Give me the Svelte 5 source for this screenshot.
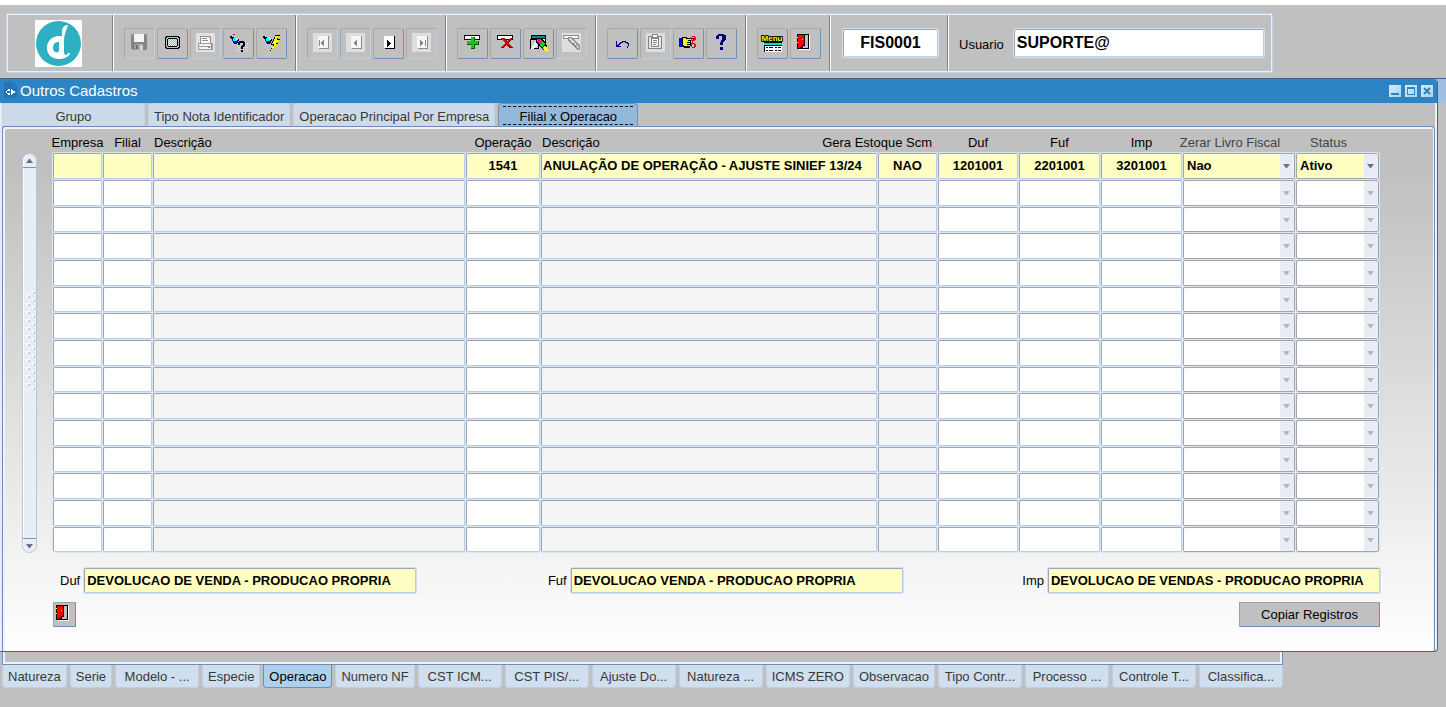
<script>
  const toolbarGroups = [
    [
      { icon: 'save', label: 'Salvar', off: true },
      { icon: 'screen', label: 'Tela' },
      { icon: 'print', label: 'Imprimir', off: true },
      { icon: 'enterQuery', label: 'Entrar consulta' },
      { icon: 'runQuery', label: 'Executar consulta' }
    ],
    [
      { icon: 'first', label: 'Primeiro', off: true },
      { icon: 'previous', label: 'Anterior', off: true },
      { icon: 'next', label: 'Proximo' },
      { icon: 'last', label: 'Ultimo', off: true }
    ],
    [
      { icon: 'insert', label: 'Inserir registro' },
      { icon: 'remove', label: 'Remover registro' },
      { icon: 'clear', label: 'Limpar tela' },
      { icon: 'edit', label: 'Editar', off: true }
    ],
    [
      { icon: 'undo', label: 'Desfazer' },
      { icon: 'paste', label: 'Colar', off: true },
      { icon: 'hand', label: 'Lista de valores' },
      { icon: 'help', label: 'Ajuda' }
    ],
    [
      { icon: 'menu', label: 'Menu' },
      { icon: 'door', label: 'Sair' }
    ]
  ];

  const topTabs = ['Grupo', 'Tipo Nota Identificador', 'Operacao Principal Por Empresa', 'Filial x Operacao'];
  const activeTop = 'Filial x Operacao';

  const bottomTabs = [
    'Natureza', 'Serie', 'Modelo - ...', 'Especie', 'Operacao', 'Numero NF', 'CST ICM...', 'CST PIS/...',
    'Ajuste Do...', 'Natureza ...', 'ICMS ZERO', 'Observacao', 'Tipo Contr...', 'Processo ...',
    'Controle T...', 'Classifica...'
  ];
  const activeBottom = 'Operacao';

  const columns = [
    { key: 'empresa', title: 'Empresa', kind: 'code' },
    { key: 'filial', title: 'Filial', kind: 'code' },
    { key: 'filialDesc', title: 'Descrição', kind: 'text', locked: true },
    { key: 'operacao', title: 'Operação', kind: 'code' },
    { key: 'operacaoDesc', title: 'Descrição', kind: 'text', locked: true },
    { key: 'scm', title: 'Gera Estoque Scm', kind: 'code', locked: true, wide: true },
    { key: 'duf', title: 'Duf', kind: 'code' },
    { key: 'fuf', title: 'Fuf', kind: 'code' },
    { key: 'imp', title: 'Imp', kind: 'code' },
    { key: 'zerar', title: 'Zerar Livro Fiscal', kind: 'choice', options: ['Nao', 'Sim'] },
    { key: 'status', title: 'Status', kind: 'choice', options: ['Ativo', 'Inativo'] }
  ];

  const first = {
    operacao: '1541',
    operacaoDesc: 'ANULAÇÃO DE OPERAÇÃO - AJUSTE SINIEF 13/24',
    scm: 'NAO',
    duf: '1201001',
    fuf: '2201001',
    imp: '3201001',
    zerar: 'Nao',
    status: 'Ativo'
  };
  const rows = [first, ...Array.from({ length: 14 }, () => ({}))];

  const details = [
    { id: 'duf', label: 'Duf', value: 'DEVOLUCAO DE VENDA - PRODUCAO PROPRIA' },
    { id: 'fuf', label: 'Fuf', value: 'DEVOLUCAO VENDA - PRODUCAO PROPRIA' },
    { id: 'imp', label: 'Imp', value: 'DEVOLUCAO DE VENDAS - PRODUCAO PROPRIA' }
  ];

  const grip = Array.from({ length: 25 }, (_, i) => ({ x: i % 2 ? 3 : 8, y: i * 4 }));
</script>

{#snippet torch()}
  <path d="M2 3h2v1h2v1h3v1h2v2h-1v2H9v1H6v-1H5V8H4V6H3V5H2z" fill="#000" />
  <path d="M5 5h3v1h2v1H9v1H7v1H5V8H4V6h1z" fill="#0ff" />
  <path d="M4 6h1v2h2v1h2v1H6V9H5V8H4z" fill="#00f" />
  <path d="M8 5h1v1h1v1H8z" fill="#fff" />
{/snippet}

{#snippet doorShape()}
  <path d="M2 1h12v15H2z" fill="#000" />
  <path d="M14 2h1v15H4v-1h10z" fill="#fff" />
  <path d="M10 2h3v13H8v-2h2z" fill="#c0c0c0" />
  <path d="M3 2h6v10H7v2H5v1H3z" fill="#f00" />
  <path d="M7 6h1v1H7zM2 4h1v1H2zM2 9h1v1H2z" fill="#ff0" />
{/snippet}

{#snippet glyph(name)}
  <svg class="glyph" viewBox="0 0 21 21" shape-rendering="crispEdges" aria-hidden="true">
    {#if name === 'save'}
      <path d="M2 1h16v16H4v-1H2z" fill="#858585" />
      <path d="M5 1h10v8H5z" fill="#f4f4f4" />
      <path d="M3 2h1v1H3zM16 2h1v1h-1z" fill="#c0c0c0" />
      <path d="M6 11h8v6H6z" fill="#a9a9a9" />
      <path d="M7 12h2v4H7z" fill="#707070" />
      <path d="M11 12h3v5h-3z" fill="#d2d2d2" />
    {:else if name === 'screen'}
      <path d="M4 3h13v1h1v11h-1v1H4v-1H3V4h1z" fill="#000" />
      <path d="M4 5h1V4h11v1h1v9h-1v1H5v-1H4z" fill="#c0c0c0" />
      <path d="M6 5h9v1h1v7h-1v1H6v-1H5V6h1z" fill="#000" />
      <path d="M6 6h9v7H6z" fill="#e8ffff" />
      <path d="M6 6.5h9M6 8.5h9M6 10.5h9M6 12.5h9" stroke="#30dcdc" stroke-dasharray="1 1" />
      <path d="M7 7.5h8M7 9.5h8M7 11.5h8" stroke="#30dcdc" stroke-dasharray="1 1" />
    {:else if name === 'print'}
      <path d="M1 0h19v19H1z" fill="#e2e2e2" />
      <path d="M5 3h9l2 2v6H5z" fill="#8c8c8c" />
      <path d="M6 4h8v1h1v5H6z" fill="#fff" />
      <path d="M7 5.5h5M7 7.5h6" stroke="#8c8c8c" />
      <path d="M3 10h15v7H3z" fill="#9a9a9a" />
      <path d="M4 11h12v2H4zM4 14h12v2H4z" fill="#f4f4f4" />
      <path d="M13 14h2v1h-2z" fill="#8c8c8c" />
    {:else if name === 'enterQuery'}
      {@render torch()}
      <path d="M5 1h2v1H5z" fill="#f00" />
      <path d="M9 10.5h11M9 12.5h11M9 14.5h11M9 16.5h11M9 18.5h11" stroke="#ff0" stroke-dasharray="1 1" />
      <path d="M11 8h5v1h1v4h-1v1h-1v2h-2v-3h1v-1h1v-2h-3v2h-2V9h1zM13 17h2v2h-2z" fill="#000" />
    {:else if name === 'runQuery'}
      {@render torch()}
      <path d="M14 2h5v1h-1v1h-1v2h2v1h-1v1h-1v1h-1v1h1v1h-1v1h-1v1h-1v1h-1v1h-1v1h-1v1h-1v1h-1v1H9v-2h1v-2h1v-1h1v-2h-2v-2h1V8h1V6h1V4h1z" fill="#000" />
      <path d="M14 3h4v1h-1v1h-1v2h2v1h-1v1h-1v1h-1v1h1v1h-1v1h-1v1h-1v1h-1v1h-1v1h-1v-1h1v-2h1v-1h1v-2h-2v-1h1V8h1V6h1z" fill="#ff0" />
    {:else if name === 'first' || name === 'previous' || name === 'last'}
      <path d="M1 0h19v19H1z" fill="#dedede" />
      <path d="M6 3h11v13H7v-1H6z" fill="#8c8c8c" />
      <path d="M6 3h10v12H6z" fill="#f6f6f6" />
      {#if name === 'first'}
        <path d="M7 7h1v6H7zM12 7v6h-1v-1h-1v-1H9V9h1V8h1V7z" fill="#858585" />
      {:else if name === 'previous'}
        <path d="M12 7v6h-1v-1h-1v-1H9V9h1V8h1V7z" fill="#858585" />
      {:else}
        <path d="M14 7h1v6h-1zM9 7v6h1v-1h1v-1h1V9h-1V8h-1V7z" fill="#858585" />
      {/if}
    {:else if name === 'next'}
      <path d="M6 3h11v13H7v-1H6z" fill="#000" />
      <path d="M6 3h10v12H6z" fill="#fff" />
      <path d="M9 7h1v1h1v1h1v1h1v1h-1v1h-1v1h-1v1H9z" fill="#000" />
    {:else if name === 'insert' || name === 'remove'}
      <path d="M2 2h16v5H2z" fill="#000" />
      <path d="M3 3h14v3H3z" fill="#fff" />
      {#if name === 'insert'}
        <path d="M9 4h4v4h4v4h-4v4H9v-4H5V8h4z" fill="#005a00" />
        <path d="M9 4h3v4h4v3h-4v4H9v-4H5V8h4z" fill="#10c818" />
      {:else}
        <path d="M6 5h3l3 3 3-3h3l-4 5 4 5h-4l-3-3-2 3H6l4-5z" fill="#7c0000" />
        <path d="M6 5h2l4 4 3-4h2l-4 5 4 4h-3l-3-3-3 3H6l4-4z" fill="#d00808" />
      {/if}
    {:else if name === 'clear'}
      <path d="M3 2h15v9H3z" fill="#000" />
      <path d="M4 3h13v2H4z" fill="#008c8c" />
      <path d="M4 6h13v4H4z" fill="#fff" />
      <path d="M2 6h9v10H2z" fill="#000" />
      <path d="M3 7h7v8H3z" fill="#c8c8c8" />
      <path d="M3 16l4-7 3-2v4l-4 5z" fill="#fff" />
      <path d="M8 5h5l5 5 1 4 1 4-4-1-3-2-5-6z" fill="#000" />
      <path d="M9 6h3l3 3-3 3-3-4z" fill="#ff1493" />
      <path d="M14 9h2l1 2-2 3h-2l-1-2z" fill="#00d820" />
      <path d="M16 13h2l2 4v2l-4-2-1-2z" fill="#ff0" />
    {:else if name === 'edit'}
      <path d="M1 0h19v19H1z" fill="#dedede" />
      <path d="M2 2h16v4H2z" fill="#8c8c8c" />
      <path d="M3 3h14v2H3z" fill="#f8f8f8" />
      <path d="M7 4h4l8 9v4h-3L7 8z" fill="#8c8c8c" />
      <path d="M8 5h2l8 9v2h-1L8 7z" fill="#c4c4c4" />
      <path d="M9 5l8 9" stroke="#f4f4f4" />
      <path d="M14 10l-3 2M16 12l-3 2" stroke="#858585" />
    {:else if name === 'undo'}
      <path d="M4 8h1v4h1v-1h1v-1h1V9h2V8h4v1h2v1h1v3h-1v2h-1v-2h1v-2h-1v-1h-2V9h-2v1H9v1H8v1H7v1h2v1H4z" fill="#000080" />
    {:else if name === 'paste'}
      <path d="M1 0h19v19H1z" fill="#dedede" />
      <path d="M3 3h4V1h6v2h4v13H3z" fill="#858585" />
      <path d="M4 4h12v11H4z" fill="#e8e8e8" />
      <path d="M6 4h8v10H6z" fill="#858585" />
      <path d="M8 2h4v2H8zM7 6h6v7H7z" fill="#fafafa" />
      <path d="M8 7.5h4M8 9.5h4M8 11.5h3" stroke="#858585" />
    {:else if name === 'hand'}
      <path d="M1 5h3v9H1z" fill="#0000e8" />
      <path d="M4 4h5v1h7v3h-3v2h1v3h-2v2H6v-1H4z" fill="#000" />
      <path d="M5 5h3v1h7v1h-5v1h2v1h-3v1h3v1H9v1h3v1H6v-1H5z" fill="#ffe818" />
      <path d="M5 7h1v1H5zM6 9h1v1H6zM5 11h1v1H5z" fill="#fff" />
      <path d="M14 3h3v1h1v3h-1v1h-2v2h2v1h1v3h-1v1h-3v-1h-1v-3h1V8h-1V4h1zM15 4h-1v3h2V4zM14 11v3h2v-3z" fill="#f00" fill-rule="evenodd" />
    {:else if name === 'help'}
      <path d="M7 1h6v1h2v5h-1v1h-1v1h-1v3H9V9h1V7h1V3H8v3H5V3h1V2h1zM9 14h3v3H9z" fill="#000080" />
    {:else if name === 'menu'}
      <text
        x="10" y="8" text-anchor="middle" font-family="Liberation Sans" font-size="8" font-weight="700"
        fill="#ff0" stroke="#000" stroke-width="2" stroke-linejoin="round" paint-order="stroke">Menu</text>
      <path d="M2 9h18v10H2z" fill="#000" />
      <path d="M2 10h18v2H2z" fill="#00e0e0" />
      <path d="M3 13h17v6H3z" fill="#fff" />
      <path d="M4 14.5h2M7 14.5h4M13 14.5h2M16 14.5h3M4 17.5h2M7 17.5h4M13 17.5h2M16 17.5h3" stroke="#000" />
    {:else if name === 'door'}
      {@render doorShape()}
    {/if}
  </svg>
{/snippet}

<header class="toolbar">
  <div class="group brand">
    <svg class="logo" viewBox="0 0 47 47" aria-hidden="true">
      <path d="M0 0h47v47H0z" fill="#fff" />
      <circle cx="23.500" cy="23.500" r="22.500" fill="#2eafc2" />
      <path d="M27 16C17 15 12 21 12 28c0 7 5 11 12 11 5 0 9-2 10-5-3 2-5 1-5-2V20c0-5 2-9 4-15-4 0-6 3-6 6v5zM24 22v9c-2 3-6 1-6-3s2-6 6-6z" fill="#fff" fill-rule="evenodd" />
      <path d="M27 37c4 0 7-2 7-4" fill="none" stroke="#fff" stroke-width="2" />
    </svg>
  </div>
  {#each toolbarGroups as group}
    <div class="group">
      {#each group as item}
        <button class="tool" class:off={item.off} disabled={item.off} aria-label={item.label}>
          {@render glyph(item.icon)}
        </button>
      {/each}
    </div>
  {/each}
  <div class="group program">
    <input class="big field code" aria-label="Programa" value="FIS0001" readonly />
  </div>
  <div class="group user">
    <label for="usuario">Usuario</label>
    <input id="usuario" class="big field" value="SUPORTE@" />
  </div>
</header>

<div class="workspace">
  <main class="window">
    <div class="titlebar">
      <svg class="page" viewBox="0 0 13 16" aria-hidden="true">
        <path d="M0 0h8v5h5v11H0z" fill="#2374b2" />
        <path d="M9 0l4 4H9z" fill="#2374b2" />
        <path d="M6 7H4v1H3v4h1v1h2v-2H5V9h1zM2 9h3v2H2zM7 7l5 3-5 3z" fill="#fff" shape-rendering="crispEdges" />
      </svg>
      <h1>Outros Cadastros</h1>
      <div class="controls">
        <button aria-label="Minimizar"><svg viewBox="0 0 12 12"><path d="M2 8h8v2H2z" fill="#2c84c4" /></svg></button>
        <button aria-label="Maximizar"><svg viewBox="0 0 12 12" shape-rendering="crispEdges"><path d="M2 2h8v8H2zM3 4v5h6V4z" fill="#2c84c4" fill-rule="evenodd" /></svg></button>
        <button aria-label="Fechar"><svg viewBox="0 0 12 12"><path d="M3 3l6 6M9 3l-6 6" stroke="#2c84c4" stroke-width="2" /></svg></button>
      </div>
    </div>

    <nav class="tabs top">
      {#each topTabs as tab}
        <button class="tab" class:active={tab === activeTop}><span>{tab}</span></button>
      {/each}
    </nav>

    <section class="panel">
      <div class="records">
        <div class="scrollbar">
          <button aria-label="Subir"><svg viewBox="0 0 7 4"><path d="M0 4h7L4 0H3z" fill="#6a7086" /></svg></button>
          <div class="track">
            <svg class="grip" viewBox="0 0 12 100" shape-rendering="crispEdges" aria-hidden="true">
              {#each grip as dot}
                <path d="M{dot.x} {dot.y}h3v1h-1v1h-1v1h-1z" fill="#fff" />
                <path d="M{dot.x + 2} {dot.y + 1}h1v1h-1v1h-1v-1h1z" fill="#8aa2c4" />
              {/each}
            </svg>
          </div>
          <button aria-label="Descer"><svg viewBox="0 0 7 4"><path d="M0 0h7L4 4H3z" fill="#6a7086" /></svg></button>
        </div>

        <table>
          <colgroup>
            {#each columns as column}<col class={column.key} />{/each}
          </colgroup>
          <thead>
            <tr>
              {#each columns as column}
                <th class={column.kind}><div class:wide={column.wide}>{column.title}</div></th>
              {/each}
            </tr>
          </thead>
          <tbody>
            {#each rows as row, index}
              <tr class:current={index === 0}>
                {#each columns as column}
                  <td class={column.kind} class:locked={column.locked}>
                    {#if column.kind === 'choice'}
                      <select aria-label={column.title} disabled={index > 0} value={row[column.key] ?? ''}>
                        {#if index > 0}<option value=""></option>{/if}
                        {#each column.options as option}<option value={option}>{option}</option>{/each}
                      </select>
                    {:else}
                      <input aria-label={column.title} value={row[column.key] ?? ''} readonly={column.locked} />
                    {/if}
                  </td>
                {/each}
              </tr>
            {/each}
          </tbody>
        </table>
      </div>

      <div class="details">
        {#each details as item}
          <div class="detail {item.id}">
            <label for={item.id}>{item.label}</label>
            <input id={item.id} class="field" value={item.value} readonly />
          </div>
        {/each}
      </div>

      <div class="actions">
        <button class="push exit" aria-label="Sair">
          <svg class="glyph" viewBox="0 0 21 21" shape-rendering="crispEdges" aria-hidden="true">{@render doorShape()}</svg>
        </button>
        <button class="push copy">Copiar Registros</button>
      </div>
    </section>
  </main>
</div>

<footer>
  <div class="edge"></div>
  <nav class="tabs bottom">
    {#each bottomTabs as tab}
      <button class="tab" class:active={tab === activeBottom} class:cut={tab.endsWith('...')}><span>{tab}</span></button>
    {/each}
  </nav>
</footer>

<style>
  :global(body) {
    background: #c0c0c0;
    border-top: 5px solid #fff;
    font-family: "Liberation Sans", Arial, sans-serif;
    font-size: 13px;
    color: #000;
  }

  button, input, select, h1, th {
    font: inherit;
    color: inherit;
    margin: 0;
    padding: 0;
    box-sizing: border-box;
  }

  svg {
    display: block;
  }

  .toolbar {
    display: flex;
    width: fit-content;
    height: 60px;
    box-sizing: border-box;
    margin: 8px 6px 5px;
    border: 1px solid #bdd2ea;
    box-shadow: inset 0 0 0 1px #e9f1fa;
  }

  .group {
    display: flex;
    align-items: center;
    gap: 2px;
    padding: 0 9px 0 10px;
    margin: 1px 0;
    border-right: 1px solid #fff;
    box-shadow: inset -1px 0 #808080;
  }

  .group.brand {
    padding: 0 31px 0 28px;
  }

  .group.program {
    padding: 0 10px 0 12px;
  }

  .group.user {
    border: 0;
    box-shadow: none;
    gap: 10px;
    padding: 0 8px 0 10px;
  }

  .user label {
    padding-top: 3px;
  }

  .logo {
    width: 47px;
    height: 47px;
  }

  .tool {
    display: grid;
    place-items: center;
    width: 31px;
    height: 31px;
    background: #c0c0c0;
    border: 1px solid #a6a6a6;
    border-right-color: #6f8fb5;
    border-bottom-color: #6f8fb5;
    border-radius: 2px;
  }

  .tool.off {
    border-right-color: #b8cfe5;
    border-bottom-color: #b8cfe5;
  }

  .glyph {
    width: 21px;
    height: 21px;
    overflow: visible;
  }

  .field {
    height: 25px;
    padding: 0 2px;
    border: 1px solid #b8cde6;
    border-top-color: #9ba5b6;
    border-left-color: #9ba5b6;
    border-radius: 2px;
    box-shadow: 0 0 0 1px #d3e0ef;
    font-weight: 700;
    background: #fff;
  }

  .field.big {
    width: 250px;
    height: 28px;
    font-size: 16px;
  }

  .field.big.code {
    width: 95px;
    text-align: center;
  }

  .workspace {
    border-top: 1px solid #42618f;
    padding-right: 8px;
    background: linear-gradient(#a1c0e1, #a1c0e1) no-repeat 0 0 / 100% 24px;
  }

  .window {
    border-right: 1px solid #45648f;
    border-bottom: 1px solid #45648f;
    border-radius: 0 4px 4px 0;
    padding: 0 2px 0 2px;
    background: linear-gradient(#c0c0c0 16%, #fff);
    box-shadow: inset -2px 0 #eef3f9, inset 2px 0 #e6edf6;
  }

  .titlebar {
    display: flex;
    align-items: center;
    gap: 3px;
    height: 24px;
    margin: 0 -2px;
    padding: 0 4px;
    background: #2c84c4;
    border-top-right-radius: 4px;
    color: #fff;
  }

  .titlebar h1 {
    flex: 1;
    font-size: 15px;
    line-height: 26px;
    font-weight: 400;
  }

  .page {
    width: 13px;
    height: 16px;
    margin-bottom: 2px;
  }

  .controls {
    display: flex;
    gap: 4px;
  }

  .controls button {
    width: 12px;
    height: 12px;
    border: 0;
    background: linear-gradient(135deg, #d9ebf8, #a9d2f0);
  }

  .tabs {
    display: flex;
    gap: 3px;
  }

  .tab {
    height: 23px;
    padding: 0 5px;
    border: 1px solid #c4d4e8;
    background: #cddaea;
    color: #383838;
    white-space: nowrap;
  }

  .top .tab {
    min-width: 143px;
    border-bottom: 0;
    border-radius: 4px 4px 0 0;
    padding-top: 3px;
  }

  .top .tab:nth-child(n + 2) {
    min-width: 140px;
  }

  .top .tab.active {
    display: grid;
    align-content: start;
    padding: 2px 4px 0;
    background: #94b8da;
    border-color: #6f8fb5;
    color: #000;
  }

  .top .active span {
    line-height: 19px;
    border: 1px dashed #000;
    border-width: 1px 0;
    height: 17px;
  }

  .panel {
    border: 1px solid #6c8eb6;
    border-bottom: 0;
    border-radius: 3px 4px 0 0;
    padding: 1px 54px 24px 19px;
    box-shadow: inset 2px 2px #eef3f8, inset -1px 0 #eef3f8;
  }

  .records {
    display: flex;
    gap: 15px;
  }

  .scrollbar {
    display: flex;
    flex-direction: column;
    width: 15px;
    box-sizing: border-box;
    margin-top: 25px;
    border: 1px solid #b9c6d8;
    border-radius: 8px;
    background: #e8edf6;
    box-shadow: inset 1px 0 #fff;
  }

  .scrollbar button {
    display: grid;
    place-items: center;
    height: 13px;
    border: 0;
    background: transparent;
  }

  .scrollbar button svg {
    width: 7px;
    height: 4px;
  }

  .track {
    flex: 1;
    display: grid;
    place-items: center;
    padding-bottom: 24px;
    border: 1px solid #7d93b4;
    border-width: 1px 0;
  }

  .grip {
    width: 12px;
    height: 100px;
  }

  table {
    flex: 1;
    width: 100%;
    table-layout: fixed;
    border-collapse: separate;
    border-spacing: 1px;
  }

  col.empresa, col.filial { width: 49px; }
  col.operacao { width: 74px; }
  col.operacaoDesc { width: 336px; }
  col.scm { width: 59px; }
  col.duf { width: 80px; }
  col.fuf, col.imp { width: 81px; }
  col.zerar { width: 112px; }
  col.status { width: 83px; }

  th {
    height: 23px;
    padding-top: 4px;
    font-weight: 400;
    white-space: nowrap;
  }

  th div {
    display: flex;
    justify-content: center;
  }

  th.text div {
    justify-content: flex-start;
    padding-left: 1px;
  }

  th div.wide {
    justify-content: flex-end;
    padding-right: 5px;
  }

  th.choice {
    color: #444;
  }

  th.choice div {
    padding-right: 18px;
  }

  td {
    box-sizing: border-box;
    height: 26px;
    padding: 0;
    border: 1px solid #b8cde6;
    border-top-color: #9ba5b6;
    border-left-color: #9ba5b6;
    border-radius: 2px;
    box-shadow: 0 0 0 1px #dbe6f2;
    background: #fff;
    overflow: hidden;
    vertical-align: top;
  }

  tr:nth-child(3n) td {
    height: 25px;
  }

  td.locked {
    background: #f4f4f4;
  }

  td.choice {
    border-color: #a0a5ae;
  }

  .current td {
    background: #ffffc1;
  }

  td input, td select {
    display: block;
    width: 100%;
    height: 23px;
    border: 0;
    background: transparent;
    font-weight: 700;
    padding: 0 1px;
  }

  td.code input {
    text-align: center;
  }

  td select {
    appearance: none;
    padding: 0 16px 0 3px;
    opacity: 1;
    background:
      url("data:image/svg+xml,%3Csvg xmlns='http://www.w3.org/2000/svg' width='7' height='4'%3E%3Cpath d='M0 0h7L4 4H3z' fill='%23b4b6ba'/%3E%3C/svg%3E") no-repeat right 4px center,
      linear-gradient(#e8edf5, #e8edf5) no-repeat right / 14px 100%;
  }

  .current select {
    background-image:
      url("data:image/svg+xml,%3Csvg xmlns='http://www.w3.org/2000/svg' width='7' height='4'%3E%3Cpath d='M0 0h7L4 4H3z' fill='%236a7086'/%3E%3C/svg%3E"),
      linear-gradient(#e8edf5, #e8edf5);
  }

  .details {
    display: flex;
    justify-content: space-between;
    margin: 15px 0 9px;
    padding-left: 38px;
  }

  .detail {
    display: flex;
    align-items: center;
    gap: 4px;
  }

  .detail.fuf {
    padding-left: 12px;
  }

  .detail .field {
    width: 332px;
    background: #ffffc1;
  }

  .actions {
    display: flex;
    justify-content: space-between;
    padding-left: 31px;
  }

  .push {
    height: 25px;
    background: #c0c0c0;
    border: 1px solid #a0a0a0;
    border-right-color: #6f8fb5;
    border-bottom-color: #6f8fb5;
    border-radius: 1px;
  }

  .exit {
    width: 23px;
    overflow: hidden;
  }

  .copy {
    width: 141px;
  }

  footer {
    width: fit-content;
    padding-left: 2px;
  }

  .edge {
    height: 13px;
    box-sizing: border-box;
    border: 1px solid #6c8eb6;
    border-top: 0;
    box-shadow: inset 2px -2px #eef3f8, inset -2px 0 #eef3f8;
  }

  .bottom .tab {
    border-color: #bccfe6;
    border-top: 0;
    border-radius: 0 0 4px 4px;
    background: #d0deee;
  }

  .bottom .tab.cut {
    min-width: 84px;
  }

  .bottom .tab.active {
    background: #aed0ec;
    border-color: #6f8fb5;
    color: #000;
  }
</style>
